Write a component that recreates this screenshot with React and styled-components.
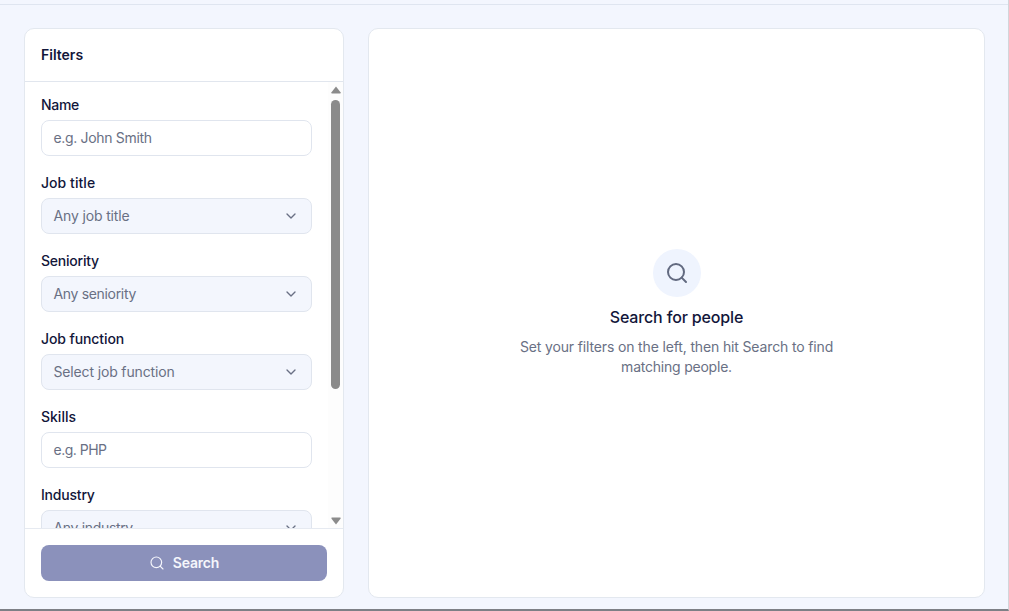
import React from "react";
import styled, { createGlobalStyle } from "styled-components";
import { ChevronDown, Search } from "lucide-react";

const GlobalStyle = createGlobalStyle`
  *, *::before, *::after { box-sizing: border-box; }
  body {
    margin: 0;
    font-family: Inter, "Liberation Sans", sans-serif;
    font-size: 14px;
    line-height: 20px;
    color: #12163a;
  }
`;

const Page = styled.div`
  display: flex;
  flex-direction: column;
  height: 611px;
  background: #f3f6fe;
  border-right: 1px solid #d3d5da;
  border-bottom: 2px solid #7e8086;
`;

const TopEdge = styled.div`
  flex: none;
  height: 5px;
  border-bottom: 1px solid #dfe5f0;
`;

const Content = styled.main`
  flex: 1;
  min-height: 0;
  display: flex;
  gap: 24px;
  padding: 23px 23px 11px 24px;
`;

const Card = styled.section`
  display: flex;
  flex-direction: column;
  background: #fff;
  border: 1px solid #e3e8ef;
  border-radius: 10px;
  overflow: hidden;
`;

const FilterCard = styled(Card)`
  flex: none;
  width: 320px;
`;

const ResultCard = styled(Card)`
  flex: 1;
  align-items: center;
  justify-content: center;
  text-align: center;
`;

const CardHeader = styled.header`
  flex: none;
  height: 53px;
  padding: 16px;
  border-bottom: 1px solid #e1e6ee;
`;

const Heading = styled.h2`
  margin: 0;
  font-size: 14px;
  line-height: 20px;
  font-weight: 600;
`;

const ScrollArea = styled.div`
  flex: 1;
  min-height: 0;
  display: flex;
  overflow: hidden;
`;

const Fields = styled.div`
  flex: 1;
  display: flex;
  flex-direction: column;
  gap: 17px;
  padding: 13px 16px 0;
`;

const Field = styled.label`
  flex: none;
  display: flex;
  flex-direction: column;
  gap: 5px;
`;

const Label = styled.span`
  font-weight: 500;
  letter-spacing: ${(p) => p.$spacing}px;
`;

const Control = styled.span`
  display: flex;
  align-items: center;
  justify-content: space-between;
  height: 36px;
  padding: 0 12px 0 11.5px;
  border: 1px solid #e0e5ee;
  border-radius: 8px;
  background: ${(p) => (p.$select ? "#f3f6fd" : "#fff")};
  color: #697084;
  letter-spacing: ${(p) => p.$spacing}px;
`;

const Scrollbar = styled.div`
  flex: none;
  width: 15px;
  display: flex;
  flex-direction: column;
  align-items: center;
  padding: 4px 0 3px;
  background: #fdfdfd;
`;

const Arrow = styled.svg`
  flex: none;
  display: block;
  width: 10px;
  height: 8px;
  fill: #8b8b8b;
`;

const Thumb = styled.div`
  width: 9px;
  height: 289px;
  margin: 6px 0 auto;
  border-radius: 5px;
  background: #8b8b8b;
`;

const CardFooter = styled.footer`
  flex: none;
  padding: 16px;
  border-top: 1px solid #e6eaf1;
`;

const SearchButton = styled.button`
  display: flex;
  align-items: center;
  justify-content: center;
  gap: 8px;
  width: 100%;
  height: 36px;
  padding: 0;
  border: 0;
  border-radius: 8px;
  background: #8b91bb;
  color: #f5f6fc;
  font: inherit;
  font-weight: 600;
  letter-spacing: -0.2px;
`;

const IconCircle = styled.div`
  display: flex;
  align-items: center;
  justify-content: center;
  width: 48px;
  height: 48px;
  margin-bottom: 8px;
  border-radius: 50%;
  background: #eff4fe;
  color: #626a80;
`;

const EmptyTitle = styled.h3`
  margin: 0 0 8px;
  font-size: 16px;
  line-height: 24px;
  font-weight: 500;
  letter-spacing: -0.15px;
`;

const EmptyText = styled.p`
  width: 340px;
  margin: 0;
  color: #697084;
`;

const Line = styled.span`
  display: block;
  letter-spacing: ${(p) => p.$spacing}px;
`;

const fields = [
  { label: "Name", labelSpacing: -0.3, hint: "e.g. John Smith", hintSpacing: -0.33 },
  { label: "Job title", labelSpacing: 0.05, hint: "Any job title", hintSpacing: -0.15, select: true },
  { label: "Seniority", labelSpacing: -0.22, hint: "Any seniority", hintSpacing: -0.33, select: true },
  { label: "Job function", labelSpacing: -0.1, hint: "Select job function", hintSpacing: -0.15, select: true },
  { label: "Skills", labelSpacing: 0, hint: "e.g. PHP", hintSpacing: -0.5 },
  { label: "Industry", labelSpacing: -0.2, hint: "Any industry", hintSpacing: -0.33, select: true },
];

export default function App() {
  return (
    <>
      <GlobalStyle />
      <Page>
        <TopEdge />
        <Content>
          <FilterCard>
            <CardHeader>
              <Heading>Filters</Heading>
            </CardHeader>
            <ScrollArea>
              <Fields>
                {fields.map((f) => (
                  <Field key={f.label}>
                    <Label $spacing={f.labelSpacing}>{f.label}</Label>
                    <Control $select={f.select} $spacing={f.hintSpacing}>
                      <span>{f.hint}</span>
                      {f.select && <ChevronDown size={16} strokeWidth={2} />}
                    </Control>
                  </Field>
                ))}
              </Fields>
              <Scrollbar>
                <Arrow viewBox="0 0 10 8">
                  <path d="M5 .5 9.5 6.2Q10 7.5 9 7.5H1Q0 7.5.5 6.2Z" />
                </Arrow>
                <Thumb />
                <Arrow viewBox="0 0 10 8">
                  <path d="M5 7.5 9.5 1.8Q10 .5 9 .5H1Q0 .5.5 1.8Z" />
                </Arrow>
              </Scrollbar>
            </ScrollArea>
            <CardFooter>
              <SearchButton type="button">
                <Search size={16} strokeWidth={1.75} />
                <span>Search</span>
              </SearchButton>
            </CardFooter>
          </FilterCard>
          <ResultCard>
            <IconCircle>
              <Search size={24} strokeWidth={2} />
            </IconCircle>
            <EmptyTitle>Search for people</EmptyTitle>
            <EmptyText>
              <Line $spacing={-0.145}>Set your filters on the left, then hit Search to find</Line>
              <Line $spacing={-0.22}>matching people.</Line>
            </EmptyText>
          </ResultCard>
        </Content>
      </Page>
    </>
  );
}
